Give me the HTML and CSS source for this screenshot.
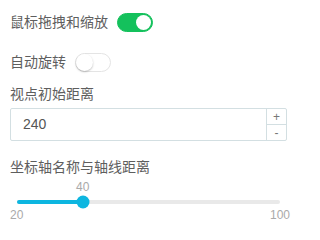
FILE: index.html
```html
<!DOCTYPE html>
<html lang="zh">
<head>
<meta charset="utf-8">
<link rel="stylesheet" href="styles.css">
</head>
<body>
<div class="panel">
  <div class="row">
    <span class="label">鼠标拖拽和缩放</span>
    <span class="switch on"><span class="knob"></span></span>
  </div>
  <div class="row row-gap">
    <span class="label">自动旋转</span>
    <span class="switch"><span class="knob"></span></span>
  </div>
  <div class="field-label first">视点初始距离</div>
  <div class="number">
    <span class="number-value">240</span>
    <span class="spin">
      <span class="spin-btn">+</span>
      <span class="spin-btn minus">-</span>
    </span>
  </div>
  <div class="field-label second">坐标轴名称与轴线距离</div>
  <div class="slider">
    <div class="slider-value"><span class="bubble" style="left:25%">40</span></div>
    <div class="track">
      <div class="fill" style="width:25%"></div>
      <div class="handle" style="left:25%"></div>
    </div>
    <div class="scale"><span>20</span><span>100</span></div>
  </div>
</div>
</body>
</html>
```
FILE: styles.css
```css
html, body {
  margin: 0;
  padding: 0;
  background: #fff;
}
body {
  font-family: "Liberation Sans", "Noto Sans CJK SC", sans-serif;
  color: #5e5e5e;
}
.panel {
  padding: 12px 14px 0 10px;
  width: 277px;
}
.row {
  display: flex;
  align-items: center;
  gap: 9px;
  height: 20px;
}
.row-gap {
  margin-top: 20px;
}
.label, .field-label {
  font-size: 14px;
  line-height: 20px;
  color: #5e5e5e;
}
.switch {
  position: relative;
  box-sizing: border-box;
  width: 36px;
  height: 19px;
  border-radius: 10px;
  background: #fff;
  border: 1px solid #e4e4e4;
}
.switch .knob {
  position: absolute;
  top: 0;
  left: 0;
  width: 17px;
  height: 17px;
  border-radius: 50%;
  background: #fff;
  box-shadow: 0 1px 2px rgba(0,0,0,0.25);
}
.switch.on {
  background: #14c15c;
  border-color: #14c15c;
}
.switch.on .knob {
  left: auto;
  right: 1px;
  top: 1px;
  width: 15px;
  height: 15px;
  box-shadow: none;
}
.field-label.first {
  margin-top: 12px;
}
.field-label.second {
  margin-top: 16px;
}
.number {
  margin-top: 4px;
  box-sizing: border-box;
  height: 33px;
  border: 1px solid #d3dfe2;
  border-radius: 2px;
  display: flex;
  align-items: stretch;
}
.number-value {
  flex: 1;
  padding-left: 12px;
  font-size: 14px;
  line-height: 31px;
  color: #555;
}
.spin {
  width: 19px;
  border-left: 1px solid #d3dfe2;
  display: flex;
  flex-direction: column;
}
.spin-btn {
  flex: 1;
  display: flex;
  align-items: center;
  justify-content: center;
  font-size: 12px;
  line-height: 1;
  color: #777;
}
.spin-btn.minus {
  border-top: 1px solid #d3dfe2;
}
.slider {
  margin: 0 7px;
}
.slider-value {
  position: relative;
  height: 20px;
}
.bubble {
  position: absolute;
  top: 0;
  transform: translateX(-50%);
  font-size: 12px;
  line-height: 20px;
  color: #aaa;
}
.track {
  position: relative;
  margin-top: 3px;
  height: 4px;
  border-radius: 2px;
  background: #e9e9e9;
}
.fill {
  height: 100%;
  border-radius: 2px;
  background: #0db6e0;
}
.handle {
  position: absolute;
  top: 50%;
  width: 13px;
  height: 13px;
  border-radius: 50%;
  background: #0db6e0;
  transform: translate(-50%, -50%);
}
.scale {
  display: flex;
  justify-content: space-between;
  margin: 4px -10px 0 -7px;
  font-size: 12px;
  line-height: 14px;
  color: #aaa;
}
```
